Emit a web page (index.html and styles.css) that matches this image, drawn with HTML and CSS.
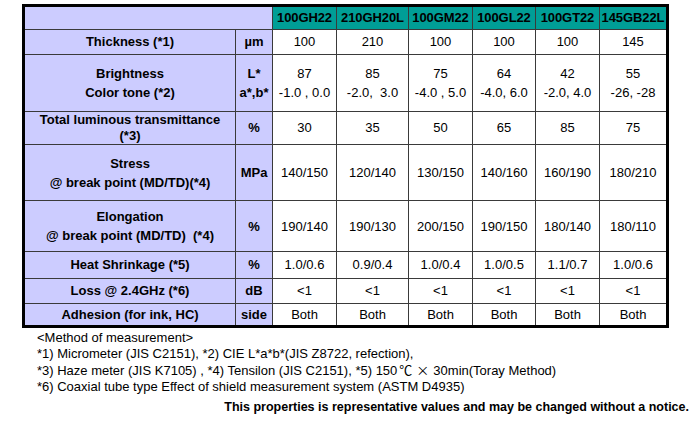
FILE: index.html
```html
<!DOCTYPE html>
<html>
<head>
<meta charset="utf-8">
<link rel="stylesheet" href="styles.css">
</head>
<body>
<div class="page">
  <table class="spec">
    <colgroup>
      <col class="c-label"><col class="c-unit">
      <col class="c-d1"><col class="c-d2"><col class="c-d3"><col class="c-d4"><col class="c-d5"><col class="c-d6">
    </colgroup>
    <tr class="r-head">
      <th class="lbl" colspan="2"></th>
      <th class="hd">100GH22</th><th class="hd">210GH20L</th><th class="hd">100GM22</th><th class="hd">100GL22</th><th class="hd">100GT22</th><th class="hd">145GB22L</th>
    </tr>
    <tr class="r-thick">
      <th class="lbl">Thickness (*1)</th><th class="lbl">µm</th>
      <td>100</td><td>210</td><td>100</td><td>100</td><td>100</td><td>145</td>
    </tr>
    <tr class="r-bright two">
      <th class="lbl">Brightness<br>Color tone (*2)</th><th class="lbl">L*<br>a*,b*</th>
      <td>87<br>-1.0 , 0.0</td><td>85<br>-2.0,&nbsp; 3.0</td><td>75<br>-4.0 , 5.0</td><td>64<br>-4.0, 6.0</td><td>42<br>-2.0, 4.0</td><td>55<br>-26, -28</td>
    </tr>
    <tr class="r-trans">
      <th class="lbl tight">Total luminous transmittance<br>(*3)</th><th class="lbl">%</th>
      <td>30</td><td>35</td><td>50</td><td>65</td><td>85</td><td>75</td>
    </tr>
    <tr class="r-stress two">
      <th class="lbl">Stress<br>@ break point (MD/TD)(*4)</th><th class="lbl">MPa</th>
      <td>140/150</td><td>120/140</td><td>130/150</td><td>140/160</td><td>160/190</td><td>180/210</td>
    </tr>
    <tr class="r-elong two">
      <th class="lbl">Elongation<br>@ break point (MD/TD) &nbsp;(*4)</th><th class="lbl">%</th>
      <td>190/140</td><td>190/130</td><td>200/150</td><td>190/150</td><td>180/140</td><td>180/110</td>
    </tr>
    <tr class="r-heat">
      <th class="lbl">Heat Shrinkage (*5)</th><th class="lbl">%</th>
      <td>1.0/0.6</td><td>0.9/0.4</td><td>1.0/0.4</td><td>1.0/0.5</td><td>1.1/0.7</td><td>1.0/0.6</td>
    </tr>
    <tr class="r-loss">
      <th class="lbl">Loss @ 2.4GHz (*6)</th><th class="lbl">dB</th>
      <td>&lt;1</td><td>&lt;1</td><td>&lt;1</td><td>&lt;1</td><td>&lt;1</td><td>&lt;1</td>
    </tr>
    <tr class="r-adh">
      <th class="lbl">Adhesion (for ink, HC)</th><th class="lbl">side</th>
      <td>Both</td><td>Both</td><td>Both</td><td>Both</td><td>Both</td><td>Both</td>
    </tr>
  </table>
  <div class="notes">
    <p>&lt;Method of measurement&gt;</p>
    <p>*1) Micrometer (JIS C2151), *2) CIE L*a*b*(JIS Z8722, refection),</p>
    <p>*3) Haze meter (JIS K7105) , *4) Tensilon (JIS C2151), *5) 150<span class="cjk">℃×</span>30min(Toray Method)</p>
    <p>*6) Coaxial tube type Effect of shield measurement system (ASTM D4935)</p>
  </div>
  <p class="disclaimer">This properties is representative values and may be changed without a notice.</p>
</div>
</body>
</html>
```

FILE: styles.css
```css
html, body {
  margin: 0;
  padding: 0;
  background: #ffffff;
}

.page {
  padding: 4px 0 0 22px;
  font-family: "Liberation Sans", Arial, "DejaVu Sans", sans-serif;
  color: #000;
  width: 670px;
}

.spec {
  border-collapse: collapse;
  table-layout: fixed;
  width: 647px;
  border: 3px solid #000;
  font-size: 13px;
  line-height: 16px;
}

.c-label { width: 212px; }
.c-unit { width: 37px; }
.c-d1 { width: 64px; }
.c-d2 { width: 72px; }
.c-d3 { width: 64px; }
.c-d4 { width: 63px; }
.c-d5 { width: 64px; }
.c-d6 { width: 68px; }

.spec th,
.spec td {
  border: 1px solid #3a3a3a;
  padding: 0;
  text-align: center;
  vertical-align: middle;
  white-space: nowrap;
  overflow: hidden;
}

.spec th.lbl {
  background: #ccccff;
  font-weight: bold;
}

.spec th.hd {
  background: #009e96;
  font-weight: bold;
  font-size: 13px;
  letter-spacing: -0.1px;
}

.spec td {
  background: #ffffff;
  font-weight: normal;
}

.two th,
.two td {
  line-height: 19px;
}

.spec th.tight {
  line-height: 16px;
}

.r-head { height: 24px; }
.r-thick { height: 25px; }
.r-bright { height: 57px; }
.r-trans { height: 33px; }
.r-stress { height: 56px; }
.r-elong { height: 51px; }
.r-heat { height: 27px; }
.r-loss { height: 25px; }
.r-adh { height: 23px; }

.notes {
  padding: 2px 0 0 15px;
  font-size: 13px;
  line-height: 16px;
}

.notes p {
  margin: 0;
}

.cjk {
  font-family: "Noto Sans CJK JP", "DejaVu Sans", sans-serif;
  font-size: 13px;
  letter-spacing: 4px;
  padding-left: 2px;
}

.disclaimer {
  margin: 4px 0 0 0;
  width: 667px;
  text-align: right;
  font-weight: bold;
  font-size: 12.5px;
  line-height: 16px;
}
```
